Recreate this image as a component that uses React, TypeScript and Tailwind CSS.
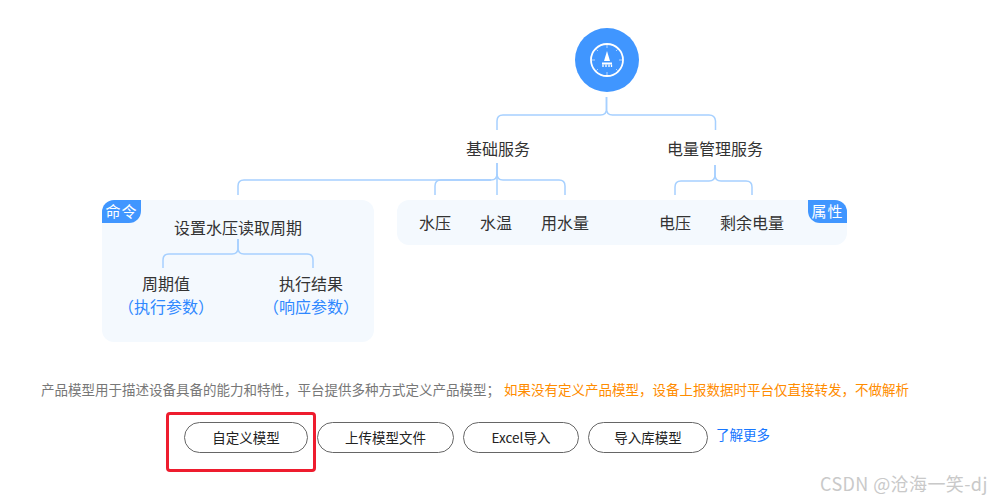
const cjk = "font-['Noto_Sans_CJK_SC','Noto_Sans',sans-serif]";

const ClockIcon = () => (
  <svg viewBox="0 0 64 64" className="block size-16">
    <circle cx="32" cy="32" r="32" fill="#4096ff" />
    <circle cx="32" cy="32" r="16" fill="none" stroke="#fff" strokeWidth="1.8" />
    <path
      d="M32 17v3M32 44v3M17 32h3M44 32h3M21.4 21.400l1.600 1.600M41 41l1.600 1.600M42.600 21.400L41 23M23 41l-1.600 1.600"
      stroke="#fff"
      strokeOpacity="0.6"
      strokeWidth="1"
    />
    <path d="M32 23l3 10h-6z" fill="#fff" />
    <path d="M27 34.500h10v2H27z" fill="#fff" />
    <path d="M28 36.500v2.500M31 36.500v2.500M34 36.500v2.500M36.500 36.500v2.500" stroke="#fff" strokeWidth="1.300" />
  </svg>
);

const Connectors = () => (
  <svg viewBox="0 0 990 379" className="absolute inset-0 h-[379px] w-[990px]" fill="none" stroke="#a6d0ff" strokeWidth="1.5">
    <path d="M606.500 97v12q0 6-6 6H503q-6 0-6 6v9" />
    <path d="M606.500 97v12q0 6 6 6H709q6 0 6.500 6v9" />
    <path d="M497 163v11q0 6-6 6H244q-6 0-6 6v9" />
    <path d="M497 163v11q0 6 6 6h56q6 0 6 6v9" />
    <path d="M491 180h-50q-6 0-6 6v9" />
    <path d="M497 174v21" />
    <path d="M715 165v10q0 6-6 6h-28q-6 0-6 6v8" />
    <path d="M715 165v10q0 6 6 6h25q6 0 6 6v8" />
    <path d="M238 239v9q0 6-6 6h-63q-6 0-6 6v8" />
    <path d="M238 239v9q0 6 6 6h63q6 0 6 6v8" />
  </svg>
);

const Param = ({ name, note }: { name: string; note: string }) => (
  <div className="flex flex-col items-center leading-[23px] whitespace-nowrap">
    <span>{name}</span>
    <span className="text-[#2f88ff]">{note}</span>
  </div>
);

const Diagram = () => (
  <div className={`relative h-[379px] w-[990px] pt-[28px] text-base text-[#333] ${cjk}`}>
    <div className="ml-[575px]">
      <ClockIcon />
    </div>

    <div className="mt-[44px] flex gap-[137px] pl-[466px] leading-6 whitespace-nowrap">
      <span>基础服务</span>
      <span>电量管理服务</span>
    </div>

    <div className="mt-[40px] flex items-start gap-[23px] pl-[102px]">
      <div className="relative flex h-[142px] w-[272px] flex-col items-center rounded-xl bg-[#f4f9fe] pt-[15px]">
        <span className="absolute top-0 left-0 flex h-[23px] w-[39px] items-center justify-center rounded-tl-xl rounded-br-xl bg-[#4096ff] text-[15px] tracking-[1px] text-white">
          命令
        </span>
        <span className="leading-6">设置水压读取周期</span>
        <div className="mt-[33px] grid grid-cols-[128px_128px] gap-x-[17px] self-start">
          <Param name="周期值" note="（执行参数）" />
          <Param name="执行结果" note="（响应参数）" />
        </div>
      </div>

      <div className="relative flex h-[45px] w-[450px] items-center gap-[29px] rounded-xl bg-[#f4f9fe] pb-[2px] pl-[22px] whitespace-nowrap">
        <span>水压</span>
        <span>水温</span>
        <span>用水量</span>
        <span className="ml-[41px]">电压</span>
        <span>剩余电量</span>
        <span className="absolute top-0 right-0 flex h-[23px] w-[39px] items-center justify-center rounded-tr-xl rounded-bl-xl bg-[#4096ff] text-[15px] tracking-[1px] text-white">
          属性
        </span>
      </div>
    </div>

    <Connectors />
  </div>
);

const buttons = [
  { label: "自定义模型", width: "w-[124px]" },
  { label: "上传模型文件", width: "w-[137px]" },
  { label: "Excel导入", width: "w-[116px]" },
  { label: "导入库模型", width: "w-[120px]" },
];

const App = () => {
  return (
    <div className={`relative h-[500px] w-[990px] overflow-hidden bg-white ${cjk}`}>
      <Diagram />

      <p className="flex pl-[41px] text-[13.5px] leading-5 whitespace-nowrap">
        <span className="w-[463px] text-[#777]">产品模型用于描述设备具备的能力和特性，平台提供多种方式定义产品模型；</span>
        <span className="text-[#ff8c00]">如果没有定义产品模型，设备上报数据时平台仅直接转发，不做解析</span>
      </p>

      <div className="mt-[23px] flex items-start gap-[9px] pl-[184px]">
        {buttons.map((b) => (
          <button
            key={b.label}
            className={`h-[31px] ${b.width} rounded-full border border-[#666] bg-white text-[13.5px] text-[#222]`}
          >
            {b.label}
          </button>
        ))}
        <a className="-ml-[1px] text-[13.5px] leading-6 text-[#1677ff]">了解更多</a>
      </div>

      <div className="absolute top-[412px] left-[166px] h-[60px] w-[150px] rounded-sm border-[3px] border-[#ee1c2e]" />
      <span className="absolute top-[471px] left-[820px] text-[18px] leading-6 tracking-[0.4px] whitespace-nowrap text-[#c9c9c9]">
        CSDN @沧海一笑-dj
      </span>
    </div>
  );
};

export default App;
